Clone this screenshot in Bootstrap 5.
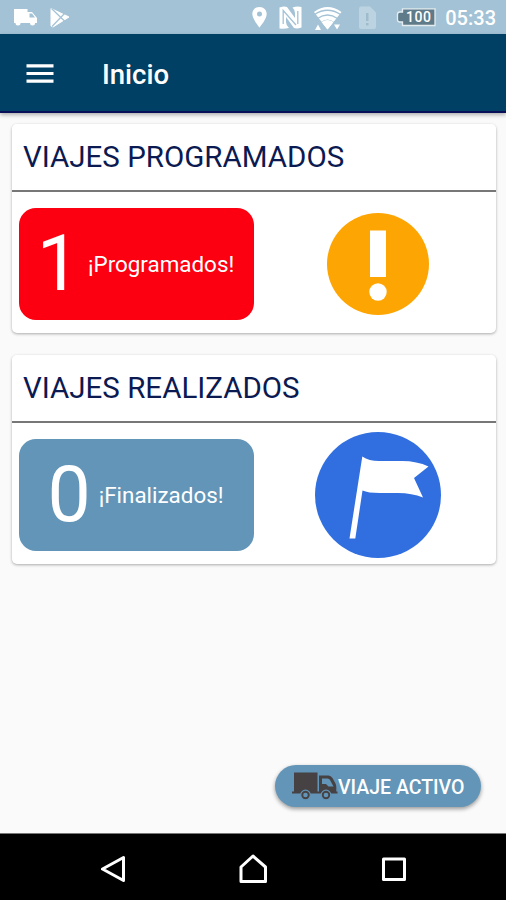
<!DOCTYPE html>
<html lang="es">
<head>
<meta charset="utf-8">
<meta name="viewport" content="width=device-width, initial-scale=1">
<title>Inicio</title>
<link href="https://cdn.jsdelivr.net/npm/bootstrap@5.3.0/dist/css/bootstrap.min.css" rel="stylesheet">
<style>
body{font-family:Roboto,"Noto Sans",sans-serif;background:#fafafa;color:#fff;height:900px;overflow:hidden;line-height:1}
svg{display:block;flex:none}
.statusbar{height:34px;background:#a3c2d6;padding:0 10px 0 14px}
.appbar{height:79px;background:#004064;border-bottom:2px solid #0a1058;box-shadow:0 2px 4px rgba(0,0,0,.3);padding:3px 26px 0}
.appbar h1{font-size:27.5px;font-weight:500;margin:2px 0 0 48px;line-height:32px}
.battery-text{font-size:14px;font-weight:500;fill:#fff;font-family:Roboto,sans-serif}
.clock{font-size:20px;font-weight:500;line-height:24px;padding-top:2px;margin-left:3px}
.panels{padding:11px 10.5px 0 11.5px;gap:22px}
.trip-card{border:0;border-radius:5px;height:209px;box-shadow:0 1px 3px rgba(0,0,0,.32)}
.trip-card .card-header{height:67.5px;background:#fff;border-bottom:2px solid #777;border-radius:5px 5px 0 0;padding:0 11.5px}
.trip-card h2{font-size:29.5px;font-weight:400;color:#0c1a52;margin:0;line-height:36px}
.trip-card .card-body{padding:3px 0 0 7.5px}
.tile{width:235px;height:112px;border-radius:17px;color:#fff;padding-right:2px}
.tile-red{background:#fc0011}
.tile-blue{background:#6295b7}
.count{font-size:77px;line-height:80px}
.caption{font-size:22.4px;line-height:28px}
.icon-cell{padding-left:6px}
.active-btn,.active-btn:hover{width:206px;height:42px;border:0;border-radius:21px;background:#6295b7;color:#fff;font-size:19.5px;font-weight:500;line-height:24px;padding:0 0 0 17px;margin:0 14.5px 26px 0;box-shadow:0 2px 4px rgba(0,0,0,.4)}
.active-btn span{padding-top:4px}
.navkeys{height:67px;background:#000;border-top:1px solid #777;padding-top:3px}
</style>
<script src="https://cdn.jsdelivr.net/npm/bootstrap@5.3.0/dist/js/bootstrap.bundle.min.js"></script>
</head>
<body class="d-flex flex-column">
<div class="statusbar d-flex align-items-center">
  <svg width="24" height="34" viewBox="14 0 24 34" fill="#fff"><path d="M14 9h13.500v3h4.500l5 6v5H14z"/><circle cx="18" cy="23" r="2.500"/><circle cx="32.500" cy="23" r="2.500"/><path d="M29.500 13.500h2.500l3 4h-5.500z" fill="#a3c2d6"/></svg>
  <svg class="ms-2" width="28" height="34" viewBox="46 0 28 34"><path d="M51 8.500 69 17 53 27l-2-1z" fill="#fff" stroke="#fff" stroke-linejoin="round"/><path d="M51.500 8.500 65 21.500M52 26.500 65 13" fill="none" stroke="#a3c2d6" stroke-width="1.200"/></svg>
  <div class="d-flex align-items-center ms-auto">
  <svg width="194" height="34" viewBox="248 0 194 34">
    <path fill="#fff" fill-rule="evenodd" d="M259.500 7c-4.300 0-7.200 3-7.200 7 0 5 7.200 13.500 7.200 13.500s7.200-8.500 7.200-13.500c0-4-2.900-7-7.200-7zm0 4.500a2.500 2.500 0 1 1 0 5 2.500 2.500 0 0 1 0-5z"/>
    <path fill="#fff" d="M279.500 7.500Q284 6 287 7L295 18V13Q295 10 292.500 7.500Q297 6 301.500 7V27.500Q297 29 294 28L286 17V22Q286 25.500 289 28Q284 29 279.500 28.500z"/>
    <path fill="none" stroke="#a3c2d6" stroke-width="1.300" d="M283.200 24V10.500L296 25M297.800 24V11"/>
    <path fill="#fff" d="M327.500 29.500 314 12q13.500-10 27.500 0z"/>
    <path fill="none" stroke="#a3c2d6" stroke-width="1.300" d="M314.500 14.500q13-8.500 26 0M317.500 18.500q10-7 20 0M321 22.700q6.500-5 13 0"/>
    <path fill="#a3c2d6" d="M312 22h9l5 8h-14zM334 22h10v8h-15z"/>
    <path fill="#fff" d="m327.500 29.500-6-7.500q6-4 12 0zM315 30l3-5.500 3 5.500zM334 24.500h6l-3 5z"/>
    <path fill="#bcd4e1" d="M361 6.500h9l6 6V27q0 2-2 2h-13q-2 0-2-2V8.500q0-2 2-2z"/>
    <path fill="#9fbccc" d="M366 13h2.500v8H366zM366 23h2.500v2.500H366z"/>
    <path fill="#5f7b89" stroke="#e5edf1" stroke-width="1.300" d="M402.500 8.800H435v16.700h-32.500v-3.500h-2.700q-2.300 0-2.300-2.500v-5q0-2.500 2.300-2.500h2.700z"/>
    <text class="battery-text" x="406" y="22" textLength="25">100</text>
  </svg>
  <span class="clock">05:33</span>
  </div>
</div>
<nav class="appbar d-flex align-items-center">
  <svg width="28" height="22" viewBox="0 0 28 22" fill="#fff" role="img" aria-label="Menú"><path d="M.5 1.200h27v3.200H.5zM.5 8.900h27v3.200H.5zM.5 16.600h27v3.200H.5z"/></svg>
  <h1>Inicio</h1>
</nav>
<main class="panels d-flex flex-column flex-grow-1">
  <section class="card trip-card">
    <div class="card-header d-flex align-items-center"><h2>VIAJES PROGRAMADOS</h2></div>
    <div class="card-body d-flex align-items-center">
      <div class="tile tile-red d-flex align-items-center justify-content-center gap-2"><span class="count">1</span><span class="caption">¡Programados!</span></div>
      <div class="icon-cell flex-fill d-flex justify-content-center">
        <svg width="102" height="102" viewBox="0 0 102 102"><circle cx="51" cy="51" r="51" fill="#fca503"/><path d="M43 17.500h16v46.500H43z" fill="#fff"/><circle cx="51" cy="79" r="8.700" fill="#fff"/></svg>
      </div>
    </div>
  </section>
  <section class="card trip-card">
    <div class="card-header d-flex align-items-center"><h2>VIAJES REALIZADOS</h2></div>
    <div class="card-body d-flex align-items-center">
      <div class="tile tile-blue d-flex align-items-center justify-content-center gap-2"><span class="count">0</span><span class="caption">¡Finalizados!</span></div>
      <div class="icon-cell flex-fill d-flex justify-content-center">
        <svg width="126" height="126" viewBox="315 432 126 126"><circle cx="378" cy="495" r="63" fill="#316fe0"/><path fill="#fff" d="M362.300 456.500Q369 461 379 461H402Q417 461 428.500 466.500L414 478 423 497.500Q412 493 398 493H380Q368 493 362.500 490.500L355.300 538.500H349.500z"/></svg>
      </div>
    </div>
  </section>
  <button type="button" class="btn active-btn d-flex align-items-center align-self-end mt-auto">
    <svg width="46" height="30" viewBox="292 772 46 30"><path fill="#464244" fill-rule="evenodd" d="M294 773.500h23.500v19H319v-16h9.500q2.500 0 4 2.500l3 5.500q.8 1.500.8 3.500v4.500h1.200v2H292v-2h2zM322 779.500v5.500h4l2.500 2.500h5l-3.500-6.500q-.8-1.500-2.500-1.500z"/><g fill="#464244" stroke="#6295b7" stroke-width="1.200"><circle cx="305.500" cy="796" r="4.800"/><circle cx="326" cy="796" r="4.800"/></g><g fill="#6295b7"><circle cx="305.500" cy="796" r="2.300"/><circle cx="326" cy="796" r="2.300"/></g></svg>
    <span class="text-nowrap">VIAJE ACTIVO</span>
  </button>
</main>
<footer class="navkeys d-flex justify-content-center align-items-center">
  <svg width="308" height="40" viewBox="99.500 849 308 40" fill="none" stroke="#fff" stroke-width="3" stroke-linejoin="round"><path d="M124 857.500v23L103 869zM241.500 867 253.500 856l12.500 11v14.500h-24.500zM384 859h21v20.500h-21z"/></svg>
</footer>
</body>
</html>
